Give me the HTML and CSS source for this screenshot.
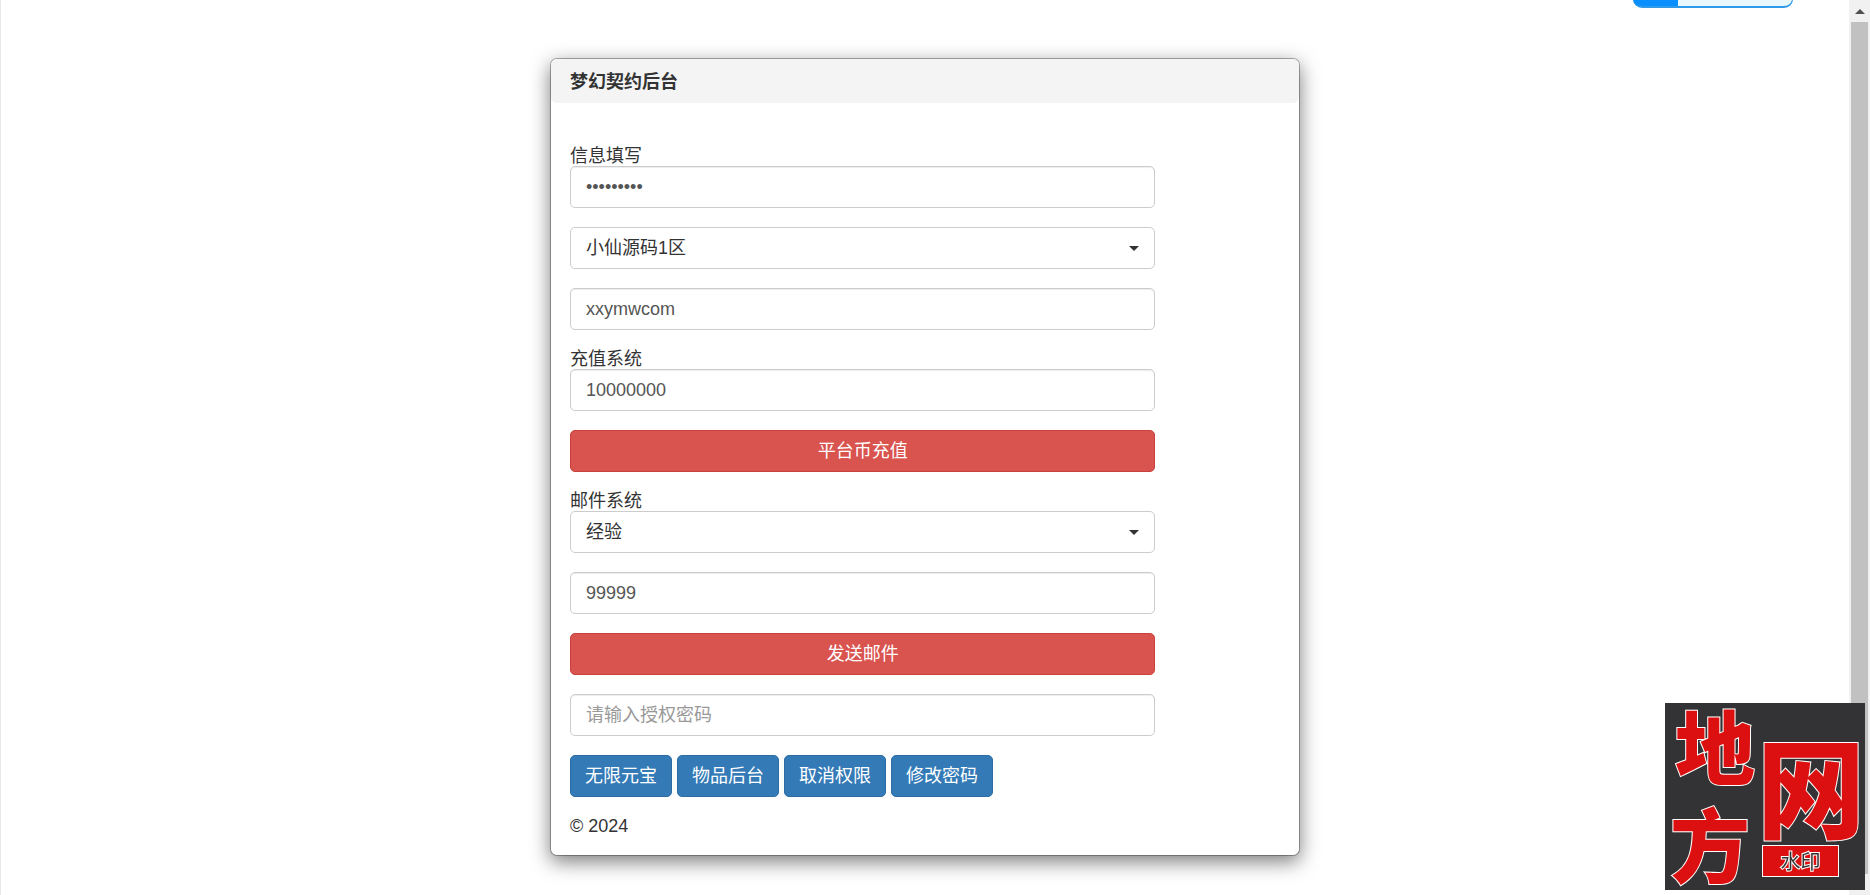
FILE: index.html
```html
<!DOCTYPE html>
<html lang="zh-CN">
  <head>
    <meta charset="UTF-8" />
    <meta name="viewport" content="width=device-width, initial-scale=1.0" />
    <title>梦幻契约后台</title>
    <link rel="stylesheet" href="styles.css">
  </head>
  <body>
    <div class="page">
      <div class="modal-content">
        <div class="modal-header">
          <h4 class="modal-title">梦幻契约后台</h4>
        </div>
        <form class="modal-body">
          <label for="checknum">信息填写</label>
          <input type="password" class="form-control" id="checknum" value="123456789" />
          <div class="select">
            <select class="form-control" id="qu" aria-label="选择大区">
              <option>小仙源码1区</option>
            </select>
          </div>
          <input type="text" class="form-control" id="uid" value="xxymwcom" aria-label="角色名" />

          <label for="chargenum">充值系统</label>
          <input type="text" class="form-control" id="chargenum" value="10000000" />
          <button type="button" class="btn btn-danger">平台币充值</button>

          <label for="mailid">邮件系统</label>
          <div class="select">
            <select class="form-control" id="mailid">
              <option>经验</option>
            </select>
          </div>
          <input type="text" class="form-control" id="mailnum" value="99999" aria-label="数量" />
          <button type="button" class="btn btn-danger">发送邮件</button>
          <input type="password" class="form-control" id="pwd" placeholder="请输入授权密码" aria-label="授权密码" />

          <div class="btn-row">
            <button type="button" class="btn btn-primary">无限元宝</button>
            <button type="button" class="btn btn-primary">物品后台</button>
            <button type="button" class="btn btn-primary">取消权限</button>
            <button type="button" class="btn btn-primary">修改密码</button>
          </div>
        </form>
        <footer class="modal-footer">© 2024</footer>
      </div>
    </div>

    <!-- scrollbar -->
    <div class="scrollbar">
      <svg width="10" height="5" viewBox="0 0 10 5"><path d="M0 5L5 0L10 5z" /></svg>
      <div class="thumb"></div>
    </div>

    <!-- floating widget, cut by the top edge -->
    <div class="widget"></div>

    <!-- watermark -->
    <div class="watermark">
      <span class="wm-di">地</span>
      <span class="wm-fang">方</span>
      <span class="wm-wang">网</span>
      <span class="wm-tag">水印</span>
    </div>
  </body>
</html>
```

FILE: styles.css
```css
* {
  box-sizing: border-box;
}

body {
  display: flex;
  min-height: 100vh;
  margin: 0;
  overflow: hidden;
  font-family: "Liberation Sans", "Noto Sans CJK SC", sans-serif;
  font-size: 18px;
  line-height: 20px;
  color: #333;
  background: #fff;
}

.page {
  flex: 1;
  padding: 58px 20px 30px;
  border-left: 1px solid #e8e8e8;
}

/* card */
.modal-content {
  max-width: 750px;
  margin: 0 auto;
  border: 1px solid rgba(0, 0, 0, 0.3);
  border-radius: 7px;
  background: #fff;
  background-clip: padding-box;
  box-shadow: 0 6px 19px rgba(0, 0, 0, 0.5);
}

.modal-header {
  padding: 13px 19px 11px;
  border-radius: 6px;
  background: #f4f4f4;
}

.modal-title {
  margin: 0;
  font-size: 18px;
  font-weight: 700;
  line-height: 20px;
}

.modal-body {
  display: flex;
  flex-direction: column;
  width: 82%;
  padding: 43px 9px 0 19px;
}

label {
  height: 20px;
}

/* form */
.form-control {
  width: 100%;
  height: 42px;
  margin: 0 0 19px;
  padding: 0 15px;
  border: 1px solid #ccc;
  border-radius: 5px;
  background: #fff;
  box-shadow: inset 0 1px 1px rgba(0, 0, 0, 0.075);
  font: inherit;
  color: #555;
}

.form-control::placeholder {
  color: #999;
}

.select {
  position: relative;
}

.select .form-control {
  display: block;
  appearance: none;
  box-shadow: none;
  color: #333;
}

.select::after {
  content: "";
  position: absolute;
  top: 19px;
  right: 16px;
  border-top: 5px solid #333;
  border-right: 5px solid transparent;
  border-left: 5px solid transparent;
  pointer-events: none;
}

.btn {
  height: 42px;
  padding: 0 14px;
  border: 1px solid transparent;
  border-radius: 5px;
  font: inherit;
  color: #fff;
  cursor: pointer;
}

.btn-danger {
  margin-bottom: 19px;
  border-color: #c9403c;
  background: #d9534f;
}

.btn-primary {
  border-color: #2e6da4;
  background: #337ab7;
}

.btn-row {
  display: flex;
  gap: 5px;
}

.modal-footer {
  padding: 19px;
}

/* scrollbar */
.scrollbar {
  display: flex;
  flex-direction: column;
  align-items: center;
  width: 21px;
  padding: 9px 2px 21px;
  background: #f1f1f1;
}

.scrollbar svg {
  fill: #505050;
}

.thumb {
  flex: 1;
  width: 100%;
  margin-top: 8px;
  background: #c1c1c1;
}

/* top right widget */
.widget {
  position: absolute;
  top: -32px;
  right: 77px;
  width: 160px;
  height: 40px;
  border: solid #2f9be8;
  border-width: 0 1px 2px 0;
  border-radius: 9px;
  background: linear-gradient(to right, #0a8fff 45px, #e8f8fd 45px);
}

/* watermark */
.watermark {
  position: fixed;
  right: 5px;
  bottom: 5px;
  width: 200px;
  height: 187px;
  background: #333335;
  font-family: "Noto Sans CJK SC", sans-serif;
  font-weight: 900;
  color: #dc1010;
}

.watermark span {
  position: absolute;
  -webkit-text-stroke: 2px #fff;
  paint-order: stroke fill;
}

.watermark .wm-di {
  top: 0;
  left: 10px;
  font-size: 80px;
  line-height: 80px;
}

.watermark .wm-fang {
  top: 98px;
  left: 5px;
  font-size: 80px;
  line-height: 80px;
}

.watermark .wm-wang {
  top: 22px;
  left: 92px;
  font-size: 108px;
  line-height: 116px;
}

.watermark .wm-tag {
  right: 26px;
  bottom: 13px;
  width: 77px;
  height: 32px;
  border: 1px solid #fff;
  background: #dc1010;
  font-size: 20px;
  font-weight: 400;
  line-height: 30px;
  text-align: center;
  color: #333;
}
```
